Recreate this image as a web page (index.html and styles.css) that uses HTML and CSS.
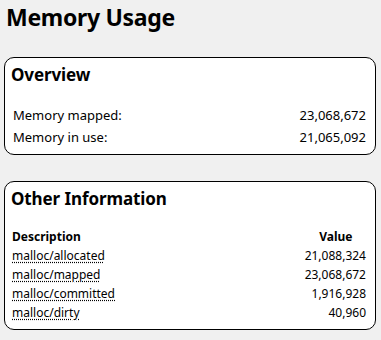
FILE: index.html
```html
<!DOCTYPE html>
<html lang="en">
<head>
<meta charset="utf-8">
<title>Memory Usage</title>
<link rel="stylesheet" href="styles.css">
</head>
<body>
  <h1 class="page-title">Memory Usage</h1>

  <section class="panel panel-overview">
    <h2 class="panel-title">Overview</h2>
    <table class="summary">
      <tr><td class="label">Memory mapped:</td><td class="num">23,068,672</td></tr>
      <tr><td class="label">Memory in use:</td><td class="num">21,065,092</td></tr>
    </table>
  </section>

  <section class="panel panel-other">
    <h2 class="panel-title">Other Information</h2>
    <table class="details">
      <thead>
        <tr><th class="col-desc">Description</th><th class="col-value">Value</th></tr>
      </thead>
      <tbody>
        <tr><td><abbr title="Bytes allocated by malloc">malloc/allocated</abbr></td><td class="num">21,088,324</td></tr>
        <tr><td><abbr title="Bytes mapped by malloc">malloc/mapped</abbr></td><td class="num">23,068,672</td></tr>
        <tr><td><abbr title="Bytes committed by malloc">malloc/committed</abbr></td><td class="num">1,916,928</td></tr>
        <tr><td><abbr title="Dirty bytes held by malloc">malloc/dirty</abbr></td><td class="num">40,960</td></tr>
      </tbody>
    </table>
  </section>
</body>
</html>
```

FILE: styles.css
```css
html, body {
  margin: 0;
  padding: 0;
}

body {
  background: #f0f0f0;
  color: #000;
  font-family: "Noto Sans", "Open Sans", sans-serif;
  display: flex;
  flex-direction: column;
  padding: 2px 5px 0 4px;
}

.page-title {
  margin: 0 0 0 2px;
  font-size: 23px;
  letter-spacing: -0.3px;
  line-height: 30px;
  font-weight: bold;
}

.panel {
  background: #fff;
  border: 1px solid #000;
  border-radius: 10px;
  padding: 7px 6px 6px 6px;
  display: flex;
  flex-direction: column;
}

.panel-overview {
  margin-top: 25px;
}

.panel-other {
  margin-top: 26px;
  padding-bottom: 7px;
}

.panel-title {
  margin: 0;
  font-size: 17px;
  line-height: 20px;
  font-weight: bold;
  letter-spacing: -0.1px;
}

table {
  border-collapse: collapse;
  width: 100%;
}

td, th {
  padding: 0 3px 0 2px;
}

.summary {
  margin-top: 19px;
  font-size: 13px;
  line-height: 22px;
}

.details {
  margin-top: 18px;
  font-size: 12px;
  line-height: 19px;
}

.details th {
  font-weight: bold;
}

.col-desc {
  text-align: left;
  padding-left: 1px;
}

/* shrink the value column to its widest number */
.col-value {
  text-align: center;
  width: 1%;
}

.details td {
  padding-left: 1px;
}

.num {
  text-align: right;
  white-space: nowrap;
}

abbr {
  text-decoration: underline dotted;
  text-underline-offset: 2px;
}
```
